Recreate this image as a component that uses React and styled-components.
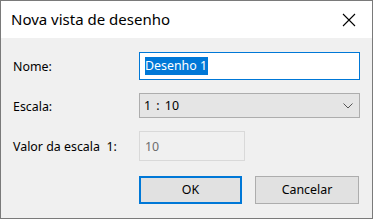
import React from "react";
import styled, { createGlobalStyle } from "styled-components";

const Global = createGlobalStyle`
  html, body {
    margin: 0;
    padding: 0;
    background: #f0f0f0;
  }
  * {
    box-sizing: border-box;
  }
`;

const Window = styled.div`
  width: 373px;
  height: 219px;
  border: 1px solid #7a7a7a;
  background: #f0f0f0;
  display: flex;
  flex-direction: column;
  font-family: "Noto Sans", "Liberation Sans", sans-serif;
  font-size: 12.4px;
  color: #000;
`;

const TitleBar = styled.div`
  height: 37px;
  background: #fff;
  display: flex;
  align-items: center;
  justify-content: space-between;
  padding-left: 10px;
`;

const Title = styled.div`
  font-size: 15px;
  color: #000;
  margin-top: -2px;
`;

const CloseBtn = styled.div`
  width: 46px;
  height: 37px;
  display: flex;
  align-items: center;
  justify-content: center;
`;

const Body = styled.div`
  flex: 1;
  padding: 14px 12px 0 12px;
  display: flex;
  flex-direction: column;
`;

const Row = styled.div`
  display: flex;
  align-items: center;
  margin-bottom: ${(p) => p.gap}px;
`;

const Label = styled.div`
  width: 126px;
  padding-top: 1px;
  white-space: pre;
`;

const TextBox = styled.div`
  width: ${(p) => p.w}px;
  height: ${(p) => p.h}px;
  border: 1px solid ${(p) => p.border};
  background: ${(p) => p.bg};
  display: flex;
  align-items: center;
  padding-left: 5px;
  color: ${(p) => p.color || "#000"};
`;

const Selected = styled.span`
  background: #0078d7;
  color: #fff;
  padding: 1px 1px 1px 0;
  line-height: 16px;
`;

const Select = styled.div`
  width: 221px;
  height: 25px;
  border: 1px solid #adadad;
  background: #e5e5e5;
  display: flex;
  align-items: center;
  justify-content: space-between;
  padding: 0 6px 0 4px;
  word-spacing: 2px;
`;

const Buttons = styled.div`
  display: flex;
  justify-content: flex-end;
  gap: 13px;
  padding-right: 1px;
  margin-top: 15px;
`;

const Button = styled.div`
  width: ${(p) => (p.primary ? 103 : 104)}px;
  height: 28px;
  border: ${(p) => (p.primary ? "2px solid #0078d7" : "1px solid #adadad")};
  background: #e1e1e1;
  display: flex;
  align-items: center;
  justify-content: center;
  padding-bottom: 1px;
`;

export default function App() {
  return (
    <>
      <Global />
      <Window>
        <TitleBar>
          <Title>Nova vista de desenho</Title>
          <CloseBtn>
            <svg width="14" height="14" viewBox="0 0 14 14">
              <path d="M1 1 L13 13 M13 1 L1 13" stroke="#000" strokeWidth="1.1" />
            </svg>
          </CloseBtn>
        </TitleBar>
        <Body>
          <Row gap={13}>
            <Label>Nome:</Label>
            <TextBox w={221} h={28} border="#0078d7" bg="#fff">
              <Selected>Desenho 1</Selected>
            </TextBox>
          </Row>
          <Row gap={13}>
            <Label>Escala:</Label>
            <Select>
              <span>1 : 10</span>
              <svg width="10" height="6" viewBox="0 0 10 6">
                <path d="M0.5 0.5 L5 5 L9.5 0.5" stroke="#555" strokeWidth="1" fill="none" />
              </svg>
            </Select>
          </Row>
          <Row gap={0}>
            <Label>Valor da escala  1:</Label>
            <TextBox w={106} h={30} border="#d9d9d9" bg="#f0f0f0" color="#6d6d6d">
              10
            </TextBox>
          </Row>
          <Buttons>
            <Button primary>OK</Button>
            <Button>Cancelar</Button>
          </Buttons>
        </Body>
      </Window>
    </>
  );
}
